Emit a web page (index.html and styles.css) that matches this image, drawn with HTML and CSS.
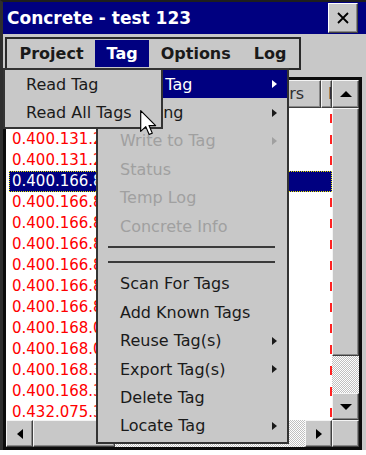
FILE: index.html
```html
<!DOCTYPE html>
<html lang="en">

<head>
    <meta charset="UTF-8">
    <meta name="viewport" content="width=device-width, initial-scale=1.0">
    <title>Concrete - test 123</title>
    <link rel="stylesheet" href="styles.css">
</head>

<body>
    <div class="window">
        <div class="titlebar">
            <span class="title">Concrete - test 123</span>
            <span class="close">
                <svg width="12" height="12" viewBox="0 0 12 12">
                    <path d="M1 1 L11 11 M11 1 L1 11" stroke="#000" stroke-width="1.8" fill="none" />
                </svg>
            </span>
        </div>

        <div class="menubar">
            <ul class="menu-row">
                <li>Project</li>
                <li class="active">Tag</li>
                <li>Options</li>
                <li>Log</li>
            </ul>
        </div>

        <div class="listview">
            <div class="header">
                <div class="hcell first">Tag</div>
                <div class="hcell second">Sensors</div>
                <div class="hcell third">Info</div>
            </div>
            <div class="sbtn"><i class="arrow up"></i></div>

            <div class="rows">
                <div class="row">0.400.131.245</div>
                <div class="row">0.400.131.246</div>
                <div class="row">0.400.131.247</div>
                <div class="row selected">0.400.166.801</div>
                <div class="row">0.400.166.802</div>
                <div class="row">0.400.166.803</div>
                <div class="row">0.400.166.804</div>
                <div class="row">0.400.166.805</div>
                <div class="row">0.400.166.806</div>
                <div class="row">0.400.166.807</div>
                <div class="row">0.400.168.010</div>
                <div class="row">0.400.168.011</div>
                <div class="row">0.400.168.312</div>
                <div class="row">0.400.168.313</div>
                <div class="row">0.432.075.314</div>
            </div>

            <div class="vscroll">
                <div class="thumb v"></div>
                <div class="track"></div>
                <div class="sbtn"><i class="arrow down"></i></div>
            </div>

            <div class="hscroll">
                <div class="sbtn side"><i class="arrow left"></i></div>
                <div class="thumb h"></div>
                <div class="track"></div>
                <div class="sbtn side"><i class="arrow right"></i></div>
            </div>
            <div class="sbtn corner"></div>
        </div>

        <!-- open Tag menu -->
        <ul class="dropdown tag-menu">
            <li class="sub hover">Read Tag</li>
            <li class="sub">Logging</li>
            <li class="sub disabled">Write to Tag</li>
            <li class="disabled">Status</li>
            <li class="disabled">Temp Log</li>
            <li class="disabled">Concrete Info</li>
            <li class="sep"></li>
            <li class="sep"></li>
            <li>Scan For Tags</li>
            <li>Add Known Tags</li>
            <li class="sub">Reuse Tag(s)</li>
            <li class="sub">Export Tag(s)</li>
            <li>Delete Tag</li>
            <li class="sub">Locate Tag</li>
        </ul>

        <!-- Read Tag submenu -->
        <ul class="dropdown read-menu">
            <li>Read Tag</li>
            <li>Read All Tags</li>
        </ul>

        <svg class="cursor" width="17" height="26" viewBox="0 0 13 20">
            <path d="M0.5 0.5 V16.5 L4.4 12.8 L7 18.8 L9.4 17.8 L6.9 12 H12 Z" fill="#fff" stroke="#000" stroke-width="0.9" stroke-linejoin="round" />
        </svg>
    </div>
</body>

</html>
```

FILE: styles.css
```css
body {
    margin: 0;
    background-color: #fff;
    font-family: "DejaVu Sans", sans-serif;
    font-size: 16px;
}

ul {
    margin: 0;
    padding: 0;
    list-style: none;
}

.window {
    position: relative;
    width: 363px;
    height: 448px;
    border-top: 2px solid #1e1e1e;
    border-left: 3px solid #2e2e2e;
    background-color: #c8c8c8;
}

/* title */
.titlebar {
    display: flex;
    align-items: center;
    height: 32px;
    padding-left: 4px;
    color: #fff;
    font-size: 17px;
    font-weight: bold;
    background-color: #000080;
}

.close {
    display: flex;
    align-items: center;
    justify-content: center;
    width: 30px;
    height: 30px;
    margin-left: auto;
    margin-right: 8px;
    box-sizing: border-box;
    background-color: #c8c8c8;
    border: 1px solid;
    border-color: #fff #404040 #404040 #fff;
    box-shadow: inset -1px -1px #888;
}

/* menu bar */
.menubar {
    height: 43px;
    padding: 3px 0 0 2px;
    box-sizing: border-box;
}

.menu-row {
    display: inline-flex;
    padding: 1px;
    border: 2px solid #2a2a2a;
}

.menu-row li {
    height: 27px;
    padding: 0 11.5px;
    line-height: 27px;
    font-weight: bold;
    color: #1a1a1a;
}

.menu-row li.active {
    color: #fff;
    background-color: #000080;
}

/* list view */
.listview {
    display: grid;
    grid-template-columns: 1fr 27px;
    grid-template-rows: 28px 1fr 27px;
    width: 353px;
    height: 367px;
    border: 3px solid #0c0c0c;
    background-color: #c8c8c8;
}

.header {
    display: flex;
    overflow: hidden;
}

.hcell {
    flex: none;
    box-sizing: border-box;
    padding-left: 6px;
    overflow: hidden;
    line-height: 26px;
    color: #303030;
    white-space: nowrap;
    border: 1px solid;
    border-color: #f4f4f4 #404040 #404040 #f4f4f4;
    box-shadow: inset -1px -1px #888;
}

.hcell.first {
    width: 228px;
}

.hcell.second {
    width: 87px;
}

.hcell.third {
    flex: 1;
}

.rows {
    overflow: hidden;
    background: repeating-linear-gradient(to bottom, transparent 0 6px, #f22 6px 15px, transparent 15px 21px) right top / 2px 100% no-repeat #fff;
}

.row {
    height: 21px;
    margin-left: 3px;
    padding-left: 3px;
    font-size: 15px;
    line-height: 21px;
    color: #f00;
    white-space: nowrap;
}

.row.selected {
    color: #fff;
    background-color: #000080;
    outline: 1px dotted #e8e800;
    outline-offset: -1px;
}

/* scroll bars */
.sbtn {
    display: flex;
    align-items: center;
    justify-content: center;
    box-sizing: border-box;
    background-color: #c8c8c8;
    border: 1px solid;
    border-color: #f4f4f4 #404040 #404040 #f4f4f4;
    box-shadow: inset -1px -1px #888;
}

.vscroll {
    display: flex;
    flex-direction: column;
}

.vscroll .sbtn {
    height: 27px;
}

.thumb {
    box-sizing: border-box;
    background-color: #c8c8c8;
    border: 1px solid;
    border-color: #f4f4f4 #404040 #404040 #f4f4f4;
    box-shadow: inset -1px -1px #888;
}

.thumb.v {
    height: 248px;
}

.thumb.h {
    width: 82px;
}

.track {
    flex: 1;
    background: repeating-conic-gradient(#c0c0c0 0 25%, #fff 0 50%) 0 0 / 2px 2px;
}

.hscroll {
    display: flex;
}

.hscroll .sbtn.side {
    width: 27px;
}

.arrow {
    width: 0;
    height: 0;
    border: solid transparent;
}

.arrow.up {
    border-width: 0 6px 6px;
    border-bottom-color: #000;
}

.arrow.down {
    border-width: 6px 6px 0;
    border-top-color: #000;
}

.arrow.left {
    border-width: 5.5px 6px 5.5px 0;
    border-right-color: #000;
}

.arrow.right {
    border-width: 5.5px 0 5.5px 6px;
    border-left-color: #000;
}

/* drop down menus, laid over the list */
.dropdown {
    position: absolute;
    top: 66px;
    padding-bottom: 2px;
    color: #1a1a1a;
    background-color: #c8c8c8;
    border: 2px solid #333;
}

.dropdown li {
    display: flex;
    align-items: center;
    justify-content: space-between;
    height: 28.4px;
    padding: 0 10px 0 22px;
    white-space: nowrap;
}

.tag-menu {
    left: 93px;
    width: 189px;
}

.read-menu {
    left: 0;
    width: 156px;
    padding-bottom: 0;
}

.read-menu li {
    padding-left: 21px;
}

.dropdown li.sub::after {
    content: "";
    border-top: 4.5px solid transparent;
    border-bottom: 4.5px solid transparent;
    border-left: 5px solid currentColor;
}

.dropdown li.hover {
    color: #fff;
    background-color: #000080;
}

.dropdown li.disabled {
    color: #a0a0a0;
}

.dropdown li.sep {
    display: block;
    height: 14.7px;
    padding: 6px 12px 0 10px;
    box-sizing: border-box;
}

.dropdown li.sep::before {
    display: block;
    content: "";
    border-top: 2px solid #3a3a3a;
}

.cursor {
    position: absolute;
    top: 108px;
    left: 137px;
}
```
